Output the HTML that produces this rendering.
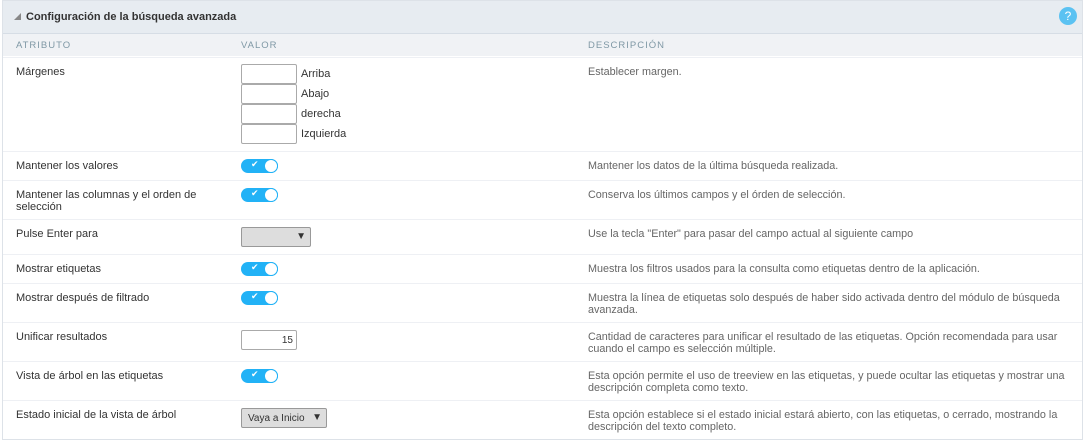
<!DOCTYPE html><html><head><style>
body{margin:0;background:#fff;font-family:"Liberation Sans",sans-serif;font-size:11px;color:#333}
.w{position:absolute;left:2px;top:0;width:1079px;height:439px;border:1px solid #dde2e8;border-top:0}
.hd{position:absolute;left:0;top:0;width:1079px;height:32px;background:#e7ecf1;border-bottom:2px solid #d6dde5;border-top:1px solid #dde2e8}
.hd b{position:absolute;left:23px;top:10px;font-size:11px;color:#333}
.tri{position:absolute;left:11px;top:12px;width:0;height:0;border-left:7px solid transparent;border-bottom:7px solid #888}
.help{position:absolute;left:1056px;top:6px;width:18px;height:18px;border-radius:50%;background:#5bc2f2;color:#fff;text-align:center;font-size:12px;line-height:18px}
.ch{position:absolute;left:0;top:34px;width:1079px;height:22px;background:#f0f2f5;font-size:9.5px;letter-spacing:1px;color:#7f98a5}
.ch span{position:absolute;top:6px}
.r{position:absolute;left:0;width:1079px;border-top:1px solid #eef0f4}
.r span{position:absolute}
.a{left:13px;top:8px;width:200px;line-height:12px}
.d{left:585px;top:8px;width:480px;color:#666;line-height:12px;font-size:10.8px}
.tg{position:absolute;left:238px;width:37px;height:14px;border-radius:7px;background:#22b2f6}
.tg:after{content:"";position:absolute;right:0;top:0;width:12px;height:12px;border-radius:50%;background:#fff;border:1px solid #22b2f6}
.tg i{position:absolute;left:10px;top:0px;color:#fff;font-style:normal;font-size:9px;line-height:10px}
.in{position:absolute;left:238px;width:54px;height:18px;border:1px solid #aaa;border-radius:2px;background:#fff}
.sel{position:absolute;left:238px;height:18px;border:1px solid #999;border-radius:2px;background:#ddd}
</style></head><body><div class="w">
<div class="hd"><div class="tri"></div><b>Configuración de la búsqueda avanzada</b><div class="help">?</div></div>
<div class="ch"><span style="left:13px">ATRIBUTO</span><span style="left:238px">VALOR</span><span style="left:585px">DESCRIPCIÓN</span></div>
<div class="r" style="top:57px;height:94px"><span class="a">Márgenes</span><span class="d">Establecer margen.</span>
<div class="in" style="top:6px"></div><span style="left:298px;top:10px">Arriba</span>
<div class="in" style="top:26px"></div><span style="left:298px;top:30px">Abajo</span>
<div class="in" style="top:46px"></div><span style="left:298px;top:50px">derecha</span>
<div class="in" style="top:66px"></div><span style="left:298px;top:70px">Izquierda</span></div>
<div class="r" style="top:151px;height:29px"><span class="a">Mantener los valores</span><div class="tg" style="top:7px"><i>✔</i></div><span class="d">Mantener los datos de la última búsqueda realizada.</span></div>
<div class="r" style="top:180px;height:39px"><span class="a">Mantener las columnas y el orden de selección</span><div class="tg" style="top:7px"><i>✔</i></div><span class="d">Conserva los últimos campos y el órden de selección.</span></div>
<div class="r" style="top:219px;height:35px"><span class="a">Pulse Enter para</span><div class="sel" style="top:7px;width:68px"><span style="right:4px;top:3px;font-size:10px">▼</span></div><span class="d">Use la tecla "Enter" para pasar del campo actual al siguiente campo</span></div>
<div class="r" style="top:254px;height:29px"><span class="a">Mostrar etiquetas</span><div class="tg" style="top:7px"><i>✔</i></div><span class="d">Muestra los filtros usados para la consulta como etiquetas dentro de la aplicación.</span></div>
<div class="r" style="top:283px;height:39px"><span class="a">Mostrar después de filtrado</span><div class="tg" style="top:7px"><i>✔</i></div><span class="d">Muestra la línea de etiquetas solo después de haber sido activada dentro del módulo de búsqueda avanzada.</span></div>
<div class="r" style="top:322px;height:39px"><span class="a">Unificar resultados</span><div class="in" style="top:7px"><span style="right:3px;top:4px;font-size:10px">15</span></div><span class="d">Cantidad de caracteres para unificar el resultado de las etiquetas. Opción recomendada para usar cuando el campo es selección múltiple.</span></div>
<div class="r" style="top:361px;height:39px"><span class="a">Vista de árbol en las etiquetas</span><div class="tg" style="top:7px"><i>✔</i></div><span class="d">Esta opción permite el uso de treeview en las etiquetas, y puede ocultar las etiquetas y mostrar una descripción completa como texto.</span></div>
<div class="r" style="top:400px;height:38px"><span class="a">Estado inicial de la vista de árbol</span><div class="sel" style="top:7px;width:84px"><span style="left:6px;top:4px;font-size:10px">Vaya a Inicio</span><span style="right:4px;top:3px;font-size:10px">▼</span></div><span class="d">Esta opción establece si el estado inicial estará abierto, con las etiquetas, o cerrado, mostrando la descripción del texto completo.</span></div>
</div></body></html>
